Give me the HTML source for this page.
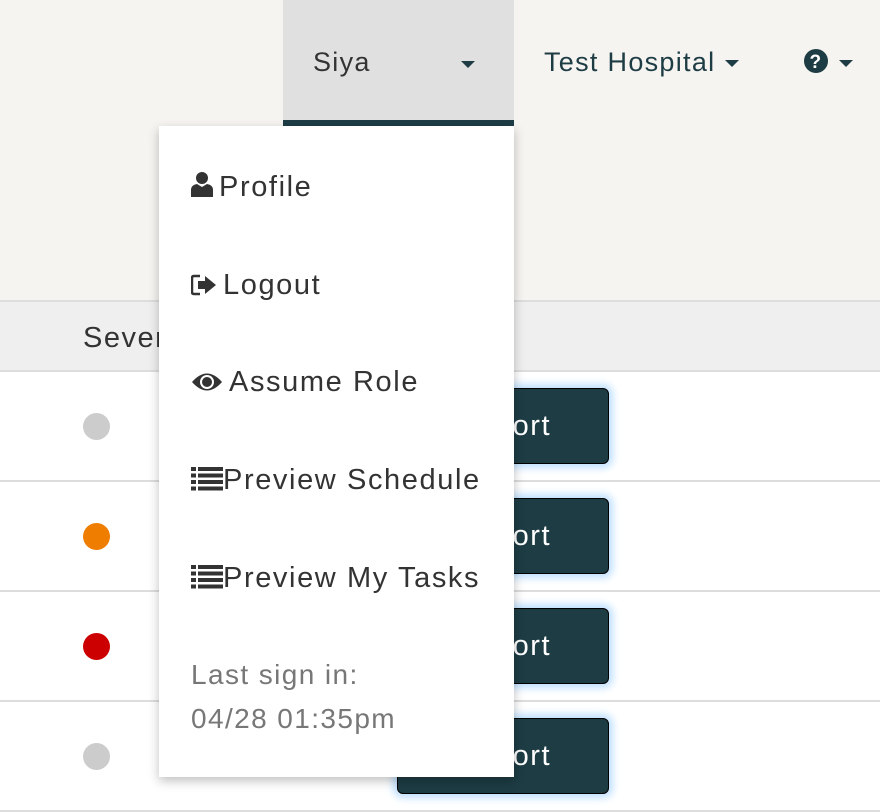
<!DOCTYPE html>
<html><head><style>
body{margin:0;width:880px;height:812px;overflow:hidden;background:#fff;font-family:"Liberation Sans",sans-serif;position:relative}
.hdr{position:absolute;left:0;top:0;width:880px;height:300px;background:#f6f4f1;border-bottom:2px solid #ddd}
.tab{position:absolute;left:283px;top:0;width:231px;height:120px;background:#e0e0e0;border-bottom:6px solid #1d3c44}
.nav{position:absolute;top:47px;font-size:27px;color:#1d3c44;letter-spacing:1.3px}
.caret{display:inline-block;width:0;height:0;border-left:7px solid transparent;border-right:7px solid transparent;border-top:7px solid #1d3c44;vertical-align:middle;margin-left:10px}
.th{position:absolute;left:0;top:302px;width:880px;height:68px;background:#efefef;border-bottom:2px solid #ddd}
.row{position:absolute;left:0;width:880px;height:108px;border-bottom:2px solid #ddd}
.dot{position:absolute;left:83px;width:27px;height:27px;border-radius:50%}
.btn{position:absolute;left:397px;width:210px;height:74px;background:#1d3c44;border:1px solid #000;border-radius:6px;box-shadow:0 0 8px 4px #bfe0ff;color:#fff;font-size:29px;line-height:74px;text-align:center;letter-spacing:1.5px}
.dd{position:absolute;left:159px;top:126px;width:355px;height:651px;background:#fff;box-shadow:0 4px 10px rgba(0,0,0,.25)}
.it{position:absolute;left:32px;font-size:29px;color:#333;white-space:nowrap;letter-spacing:1.6px}
.it svg{vertical-align:-2px;margin-right:6px}
</style></head><body>
<div class="hdr"></div>
<div class="tab"></div>
<div class="nav" style="left:313px;color:#333">Siya</div>
<div class="caret" style="position:absolute;left:461px;top:61px;margin:0"></div>
<div class="nav" style="left:544px">Test Hospital<span class="caret"></span></div>
<div class="nav" style="left:803px"><svg width="26" height="26" viewBox="0 0 26 26" style="vertical-align:-3px"><circle cx="13" cy="13" r="12" fill="#1d3c44"/><text x="13" y="20" font-size="19" font-weight="bold" text-anchor="middle" fill="#fff" font-family="Liberation Sans">?</text></svg><span class="caret"></span></div>
<div class="th"><span style="position:absolute;left:83px;top:20px;font-size:29px;color:#333;letter-spacing:1.5px">Severity</span></div>
<div class="row" style="top:372px"><div class="dot" style="top:41px;background:#ccc"></div><div class="btn" style="top:16px">Report</div></div>
<div class="row" style="top:482px"><div class="dot" style="top:41px;background:#ef7d00"></div><div class="btn" style="top:16px">Report</div></div>
<div class="row" style="top:592px"><div class="dot" style="top:41px;background:#c00"></div><div class="btn" style="top:16px">Report</div></div>
<div class="row" style="top:702px"><div class="dot" style="top:41px;background:#ccc"></div><div class="btn" style="top:16px">Report</div></div>
<div class="dd">
<div class="it" style="top:45px"><svg width="22" height="27" viewBox="0 0 22 27"><circle cx="11" cy="7" r="6" fill="#333"/><path d="M0 26V19Q0 14 6 13L11 16L16 13Q22 14 22 19V26Z" fill="#333"/></svg>Profile</div>
<div class="it" style="top:143px"><svg width="26" height="22" viewBox="0 0 26 22"><path d="M9 2H3Q1 2 1 4V18Q1 20 3 20H9" stroke="#333" stroke-width="2.5" fill="none"/><path d="M7 7H14V2L25 11L14 20V15H7Z" fill="#333"/></svg>Logout</div>
<div class="it" style="top:240px"><svg width="32" height="22" viewBox="0 0 32 22"><path d="M1 11Q16 -6 31 11Q16 28 1 11Z" fill="#333"/><circle cx="16" cy="11" r="7" fill="#fff"/><circle cx="16" cy="11" r="5" fill="#333"/></svg>Assume Role</div>
<div class="it" style="top:338px"><svg width="32" height="24" viewBox="0 0 32 24" style="margin-right:0"><g fill="#333"><rect x="0" y="0" width="5" height="4"/><rect x="7" y="0" width="25" height="4"/><rect x="0" y="6.5" width="5" height="4"/><rect x="7" y="6.5" width="25" height="4"/><rect x="0" y="13" width="5" height="4"/><rect x="7" y="13" width="25" height="4"/><rect x="0" y="19.5" width="5" height="4"/><rect x="7" y="19.5" width="25" height="4"/></g></svg>Preview Schedule</div>
<div class="it" style="top:436px"><svg width="32" height="24" viewBox="0 0 32 24" style="margin-right:0"><g fill="#333"><rect x="0" y="0" width="5" height="4"/><rect x="7" y="0" width="25" height="4"/><rect x="0" y="6.5" width="5" height="4"/><rect x="7" y="6.5" width="25" height="4"/><rect x="0" y="13" width="5" height="4"/><rect x="7" y="13" width="25" height="4"/><rect x="0" y="19.5" width="5" height="4"/><rect x="7" y="19.5" width="25" height="4"/></g></svg>Preview My Tasks</div>
<div class="it" style="top:527px;color:#777;line-height:44px;font-size:28px;letter-spacing:1.4px">Last sign in:<br>04/28 01:35pm</div>
</div>
</body></html>
